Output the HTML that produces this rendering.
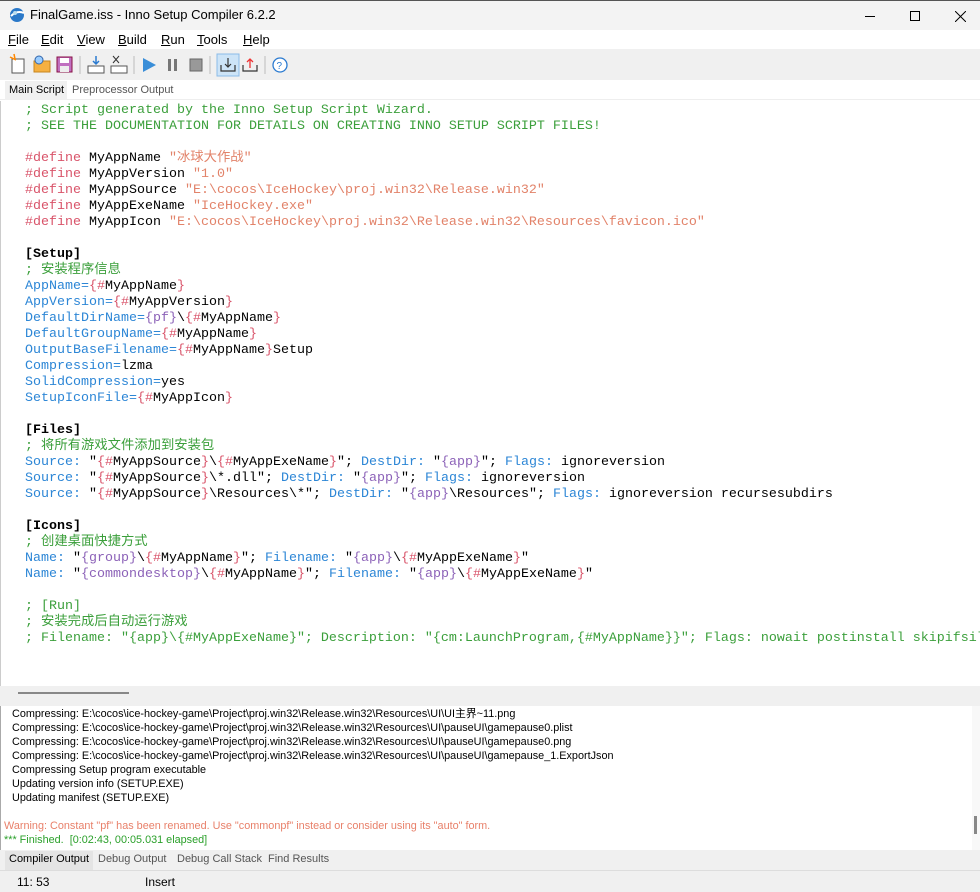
<!DOCTYPE html>
<html><head><meta charset="utf-8"><style>
*{margin:0;padding:0;box-sizing:border-box}
body{width:980px;height:892px;overflow:hidden;background:#fff;font-family:"Segoe UI","Liberation Sans","Noto Sans CJK SC",sans-serif;font-size:12px;color:#000;position:relative}
.abs{position:absolute}
#title{left:0;top:0;width:980px;height:30px;background:#f3f3f3;border-top:1px solid #555}
#title .t{left:30px;top:6px;font-size:13px}
#menu{left:0;top:30px;width:980px;height:19px;background:#fff;font-size:13px}
#menu span{position:absolute;top:2px}
#tb{left:0;top:49px;width:980px;height:31px;background:#f0f0f0}
#tabs{left:0;top:80px;width:980px;height:20px;background:#fff;border-bottom:1px solid #eee;font-size:11px}
#code{left:0;top:101px;width:980px;height:585px;padding-top:2px;background:#fff;font-family:"Liberation Mono","Noto Sans CJK SC",monospace;font-size:13.33px;line-height:16px;overflow:hidden;border-left:1px solid #ccc}
#code div{height:16px;padding-left:24px;white-space:pre}
.c{color:#3b9f3b}.s{color:#e2836a}.k{color:#2c86d6}.b{color:#d9546a}.p{color:#8c62b8}.d{color:#d9546a}
#split{left:0;top:686px;width:980px;height:20px;background:#f0f0f0}
#out{left:0;top:706px;width:972px;height:144px;padding-top:1px;background:#fff;font-size:10.85px;line-height:14px;border-left:1px solid #aaa}
#out div{padding-left:11px;white-space:pre;height:14px}
#btabs{left:0;top:850px;width:980px;height:20px;background:#f0f0f0;font-size:11px}
#status{left:0;top:870px;width:980px;height:22px;background:#f0f0f0;border-top:1px solid #ddd;font-size:12px}
</style></head><body>
<div id="title" class="abs">
<svg class="abs" style="left:9px;top:6px" width="16" height="16"><circle cx="8" cy="8" r="7" fill="#2a78c8"/><path d="M2 9 Q8 3 15 6" stroke="#fff" stroke-width="2" fill="none"/><circle cx="6" cy="6" r="2" fill="#bde"/></svg>
<span class="abs t">FinalGame.iss - Inno Setup Compiler 6.2.2</span>
<div class="abs" style="left:865px;top:15px;width:10px;height:1px;background:#000"></div>
<div class="abs" style="left:910px;top:10px;width:10px;height:10px;border:1px solid #000"></div>
<svg class="abs" style="left:955px;top:10px" width="11" height="11"><path d="M0 0L11 11M11 0L0 11" stroke="#000"/></svg>
</div>
<div id="menu" class="abs">
<span style="left:8px"><u>F</u>ile</span><span style="left:41px"><u>E</u>dit</span><span style="left:77px"><u>V</u>iew</span><span style="left:118px"><u>B</u>uild</span><span style="left:161px"><u>R</u>un</span><span style="left:197px"><u>T</u>ools</span><span style="left:243px"><u>H</u>elp</span>
</div>
<div id="tb" class="abs">
<svg width="300" height="31">
<rect x="12" y="10" width="12" height="14" fill="#fff" stroke="#555"/><path d="M10 8l6 3M14 5l1 5" stroke="#f80" stroke-width="1.5"/>
<rect x="34" y="12" width="16" height="11" fill="#f5b041" stroke="#c8861e"/><circle cx="39" cy="11" r="4" fill="#9cf" stroke="#36a"/>
<rect x="57" y="8" width="15" height="15" fill="#c070c0" stroke="#814"/><rect x="60" y="9" width="9" height="5" fill="#fff"/><rect x="60" y="17" width="9" height="6" fill="#eee"/>
<line x1="80" y1="7" x2="80" y2="25" stroke="#bbb"/>
<rect x="88" y="17" width="16" height="7" fill="#fff" stroke="#555"/><path d="M96 7v8M93 12l3 3 3-3" stroke="#2a7ad0" fill="none" stroke-width="1.5"/>
<rect x="111" y="17" width="16" height="7" fill="#fff" stroke="#555"/><path d="M113 7l6 7M119 7l-6 7" stroke="#333"/>
<line x1="134" y1="7" x2="134" y2="25" stroke="#bbb"/>
<path d="M143 9l13 7-13 7z" fill="#3a8ed8"/>
<rect x="168" y="10" width="3" height="12" fill="#777"/><rect x="174" y="10" width="3" height="12" fill="#777"/>
<rect x="190" y="10" width="12" height="12" fill="#999" stroke="#666"/>
<line x1="210" y1="7" x2="210" y2="25" stroke="#bbb"/>
<rect x="217" y="5" width="22" height="22" fill="#cde4f7" stroke="#8bbbe8"/>
<path d="M221 16v6h14v-6M228 9v9M225 15l3 3 3-3" stroke="#333" fill="none" stroke-width="1.2"/>
<path d="M243 16v6h14v-6" stroke="#333" fill="none" stroke-width="1.2"/><path d="M250 19v-9M247 13l3-3 3 3" stroke="#e33" fill="none" stroke-width="1.3"/>
<line x1="265" y1="7" x2="265" y2="25" stroke="#bbb"/>
<circle cx="280" cy="16" r="7" fill="#fff" stroke="#2a7ad0" stroke-width="1.3"/><text x="276.5" y="20" font-size="10" fill="#2a7ad0" font-family="Liberation Sans">?</text>
</svg>
</div>
<div id="tabs" class="abs">
<div class="abs" style="left:5px;top:1px;width:62px;height:19px;background:#f0f0f0"></div>
<span class="abs" style="left:9px;top:4px">Main Script</span>
<span class="abs" style="left:72px;top:4px;color:#555">Preprocessor Output</span>
</div>
<div id="code" class="abs"><div class="c">; Script generated by the Inno Setup Script Wizard.</div><div class="c">; SEE THE DOCUMENTATION FOR DETAILS ON CREATING INNO SETUP SCRIPT FILES!</div><div></div><div><span class="d">#define</span> MyAppName <span class="s">"冰球大作战"</span></div><div><span class="d">#define</span> MyAppVersion <span class="s">"1.0"</span></div><div><span class="d">#define</span> MyAppSource <span class="s">"E:\cocos\IceHockey\proj.win32\Release.win32"</span></div><div><span class="d">#define</span> MyAppExeName <span class="s">"IceHockey.exe"</span></div><div><span class="d">#define</span> MyAppIcon <span class="s">"E:\cocos\IceHockey\proj.win32\Release.win32\Resources\favicon.ico"</span></div><div></div><div><b>[Setup]</b></div><div class="c">; 安装程序信息</div><div><span class="k">AppName=</span><span class="b">{#</span>MyAppName<span class="b">}</span></div><div><span class="k">AppVersion=</span><span class="b">{#</span>MyAppVersion<span class="b">}</span></div><div><span class="k">DefaultDirName=</span><span class="p">{pf}</span>\<span class="b">{#</span>MyAppName<span class="b">}</span></div><div><span class="k">DefaultGroupName=</span><span class="b">{#</span>MyAppName<span class="b">}</span></div><div><span class="k">OutputBaseFilename=</span><span class="b">{#</span>MyAppName<span class="b">}</span>Setup</div><div><span class="k">Compression=</span>lzma</div><div><span class="k">SolidCompression=</span>yes</div><div><span class="k">SetupIconFile=</span><span class="b">{#</span>MyAppIcon<span class="b">}</span></div><div></div><div><b>[Files]</b></div><div class="c">; 将所有游戏文件添加到安装包</div><div><span class="k">Source:</span> "<span class="b">{#</span>MyAppSource<span class="b">}</span>\<span class="b">{#</span>MyAppExeName<span class="b">}</span>"; <span class="k">DestDir:</span> "<span class="p">{app}</span>"; <span class="k">Flags:</span> ignoreversion</div><div><span class="k">Source:</span> "<span class="b">{#</span>MyAppSource<span class="b">}</span>\*.dll"; <span class="k">DestDir:</span> "<span class="p">{app}</span>"; <span class="k">Flags:</span> ignoreversion</div><div><span class="k">Source:</span> "<span class="b">{#</span>MyAppSource<span class="b">}</span>\Resources\*"; <span class="k">DestDir:</span> "<span class="p">{app}</span>\Resources"; <span class="k">Flags:</span> ignoreversion recursesubdirs</div><div></div><div><b>[Icons]</b></div><div class="c">; 创建桌面快捷方式</div><div><span class="k">Name:</span> "<span class="p">{group}</span>\<span class="b">{#</span>MyAppName<span class="b">}</span>"; <span class="k">Filename:</span> "<span class="p">{app}</span>\<span class="b">{#</span>MyAppExeName<span class="b">}</span>"</div><div><span class="k">Name:</span> "<span class="p">{commondesktop}</span>\<span class="b">{#</span>MyAppName<span class="b">}</span>"; <span class="k">Filename:</span> "<span class="p">{app}</span>\<span class="b">{#</span>MyAppExeName<span class="b">}</span>"</div><div></div><div class="c">; [Run]</div><div class="c">; 安装完成后自动运行游戏</div><div class="c">; Filename: "{app}\{#MyAppExeName}"; Description: "{cm:LaunchProgram,{#MyAppName}}"; Flags: nowait postinstall skipifsilent</div></div>
<div id="split" class="abs"><div class="abs" style="left:18px;top:6px;width:111px;height:2px;background:#888"></div></div>
<div id="out" class="abs">
<div>Compressing: E:\cocos\ice-hockey-game\Project\proj.win32\Release.win32\Resources\UI\UI主界~11.png</div>
<div>Compressing: E:\cocos\ice-hockey-game\Project\proj.win32\Release.win32\Resources\UI\pauseUI\gamepause0.plist</div>
<div>Compressing: E:\cocos\ice-hockey-game\Project\proj.win32\Release.win32\Resources\UI\pauseUI\gamepause0.png</div>
<div>Compressing: E:\cocos\ice-hockey-game\Project\proj.win32\Release.win32\Resources\UI\pauseUI\gamepause_1.ExportJson</div>
<div>Compressing Setup program executable</div>
<div>Updating version info (SETUP.EXE)</div>
<div>Updating manifest (SETUP.EXE)</div>
<div></div>
<div style="padding-left:3px;color:#e8806a">Warning: Constant "pf" has been renamed. Use "commonpf" instead or consider using its "auto" form.</div>
<div style="padding-left:3px;color:#2aa02a">*** Finished.  [0:02:43, 00:05.031 elapsed]</div>
</div>
<div class="abs" style="left:972px;top:706px;width:8px;height:144px;background:#f8f8f8"><div class="abs" style="left:2px;top:110px;width:3px;height:18px;background:#888"></div></div>
<div id="btabs" class="abs">
<div class="abs" style="left:5px;top:1px;width:88px;height:19px;background:#e4e4e4"></div>
<span class="abs" style="left:9px;top:3px">Compiler Output</span>
<span class="abs" style="left:98px;top:3px;color:#555">Debug Output</span>
<span class="abs" style="left:177px;top:3px;color:#555">Debug Call Stack</span>
<span class="abs" style="left:268px;top:3px;color:#555">Find Results</span>
</div>
<div id="status" class="abs">
<span class="abs" style="left:17px;top:4px">11:  53</span>
<span class="abs" style="left:145px;top:4px">Insert</span>
</div>
</body></html>
